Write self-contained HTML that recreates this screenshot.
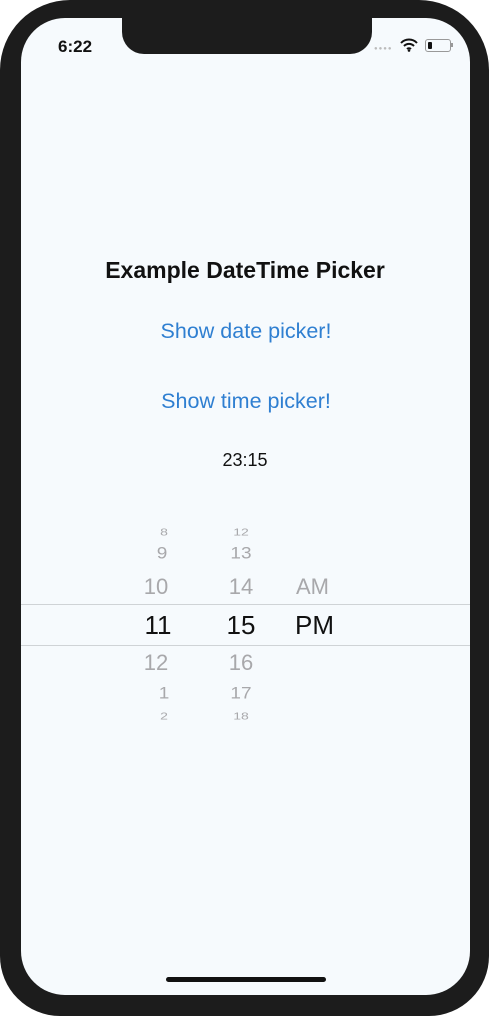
<!DOCTYPE html>
<html><head><style>
body{margin:0;width:489px;height:1016px;background:#fff;position:relative;overflow:hidden;font-family:"Liberation Sans",sans-serif}
.frame{position:absolute;left:0;top:0;width:489px;height:1016px;background:#1c1c1c;border-radius:70px 70px 60px 60px}
.screen{position:absolute;left:21px;top:18px;width:449px;height:977px;background:#f6fafd;border-radius:44px;overflow:hidden}
.notch{position:absolute;left:122px;top:18px;width:250px;height:36px;background:#1c1c1c;border-radius:0 0 22px 22px}
.t{position:absolute;white-space:nowrap}
.c{transform:translateX(-50%)}
.g{color:#a8a8ab}
.line{position:absolute;left:21px;width:449px;height:1px;background:#cfd3d6}
</style></head><body>
<div class="frame"></div>
<div class="screen"></div>
<div class="notch"></div>
<div class="t" style="left:58px;top:37px;font-size:17px;font-weight:bold;color:#111">6:22</div>
<div class="t" style="left:374px;top:46px;font-size:6px;color:#bbb;letter-spacing:1px">●●●●</div>
<svg class="t" style="left:400px;top:38px" width="18" height="14" viewBox="0 0 18 14"><path d="M1 5a11 11 0 0 1 16 0M4 8a7 7 0 0 1 10 0M7 11a3 3 0 0 1 4 0" stroke="#111" stroke-width="2" fill="none"/><circle cx="9" cy="12.5" r="1.3" fill="#111"/></svg>
<div class="t" style="left:425px;top:39px;width:24px;height:11px;border:1px solid #999;border-radius:3px"><div style="margin:2px;width:4px;height:7px;background:#111;border-radius:1px"></div></div>
<div class="t" style="left:451px;top:43px;width:2px;height:4px;background:#999"></div>
<div class="t c" style="left:245px;top:257px;font-size:23px;font-weight:bold;color:#111">Example DateTime Picker</div>
<div class="t c" style="left:246px;top:319px;font-size:21.5px;color:#2f7fd1">Show date picker!</div>
<div class="t c" style="left:246px;top:389px;font-size:21.5px;color:#2f7fd1">Show time picker!</div>
<div class="t c" style="left:245px;top:450px;font-size:18px;color:#111">23:15</div>
<div class="line" style="top:604px"></div>
<div class="line" style="top:645px"></div>
<div class="t c g" style="left:164px;top:524px;font-size:14px;transform:translateX(-50%) scaleY(.7)">8</div>
<div class="t c g" style="left:162px;top:543px;font-size:19px;transform:translateX(-50%) scaleY(.85)">9</div>
<div class="t c g" style="left:156px;top:574px;font-size:22px">10</div>
<div class="t c" style="left:158px;top:610px;font-size:26px;color:#111">11</div>
<div class="t c g" style="left:156px;top:650px;font-size:22px">12</div>
<div class="t c g" style="left:164px;top:683px;font-size:19px;transform:translateX(-50%) scaleY(.85)">1</div>
<div class="t c g" style="left:164px;top:708px;font-size:14px;transform:translateX(-50%) scaleY(.7)">2</div>
<div class="t c g" style="left:241px;top:524px;font-size:14px;transform:translateX(-50%) scaleY(.7)">12</div>
<div class="t c g" style="left:241px;top:543px;font-size:19px;transform:translateX(-50%) scaleY(.85)">13</div>
<div class="t c g" style="left:241px;top:574px;font-size:22px">14</div>
<div class="t c" style="left:241px;top:610px;font-size:26px;color:#111">15</div>
<div class="t c g" style="left:241px;top:650px;font-size:22px">16</div>
<div class="t c g" style="left:241px;top:683px;font-size:19px;transform:translateX(-50%) scaleY(.85)">17</div>
<div class="t c g" style="left:241px;top:708px;font-size:14px;transform:translateX(-50%) scaleY(.7)">18</div>
<div class="t g" style="left:296px;top:574px;font-size:22px">AM</div>
<div class="t" style="left:295px;top:610px;font-size:26px;color:#111">PM</div>
<div class="t" style="left:166px;top:977px;width:160px;height:5px;background:#111;border-radius:3px"></div>
</body></html>
